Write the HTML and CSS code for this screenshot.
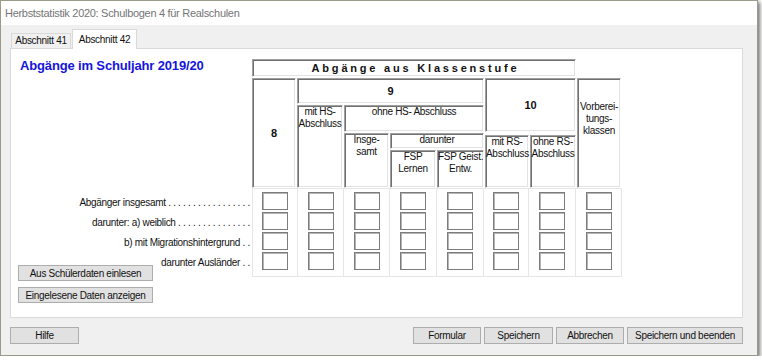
FILE: index.html
```html
<!DOCTYPE html>
<html lang="de">
<head>
  <meta charset="UTF-8">
  <meta name="viewport" content="width=device-width, initial-scale=1.0">
  <title>Herbststatistik 2020</title>
  <link rel="stylesheet" href="styles.css">
</head>
<body>

  <div class="window">
    <div class="titlebar">Herbststatistik 2020: Schulbogen 4 für Realschulen</div>

    <div class="client">
      <!-- Reiter -->
      <div class="tabs">
        <div class="tab">Abschnitt 41</div>
        <div class="tab active">Abschnitt 42</div>
      </div>

      <div class="panel">
        <div class="side">
          <h1>Abgänge im Schuljahr 2019/20</h1>
          <div class="labels">
            <div>Abgänger insgesamt . . . . . . . . . . . . . . . . .</div>
            <div>darunter: a) weiblich . . . . . . . . . . . . . . .</div>
            <div>b) mit Migrationshintergrund . .</div>
            <div>darunter Ausländer . .</div>
          </div>
          <div class="side-buttons">
            <button>Aus Schülerdaten einlesen</button>
            <button>Eingelesene Daten anzeigen</button>
          </div>
        </div>

        <div class="sheet">
          <!-- Kopf der Tabelle -->
          <div class="head">
            <div class="box mid title c1-8 r1">Abgänge aus Klassenstufe</div>
            <div class="box mid big c1 r2-5">8</div>
            <div class="box mid big c2-5 r2">9</div>
            <div class="box mid big c6-7 r2-3">10</div>
            <div class="box vorb c8 r2-5">Vorberei-<br>tungs-<br>klassen</div>
            <div class="box c2 r3-5">mit HS-<br>Abschluss</div>
            <div class="box c3-5 r3">ohne HS- Abschluss</div>
            <div class="box c3 r4-5">Insge-<br>samt</div>
            <div class="box c4-5 r4">darunter</div>
            <div class="box c4 r5">FSP<br>Lernen</div>
            <div class="box c5 r5">FSP Geist.<br>Entw.</div>
            <div class="box rs c6 r4-5">mit RS-<br>Abschluss</div>
            <div class="box rs c7 r4-5">ohne RS-<br>Abschluss</div>
          </div>

          <!-- Eingabefelder -->
          <div class="data" id="data"></div>
        </div>
      </div>

      <div class="footer">
        <button class="btn-hilfe">Hilfe</button>
        <div class="footer-right">
          <button class="w68">Formular</button>
          <button class="w69">Speichern</button>
          <button class="w68">Abbrechen</button>
          <button class="w116">Speichern und beenden</button>
        </div>
      </div>
    </div>
  </div>

  <script>
    const data = document.getElementById("data");
    for (let c = 0; c < 8; c++) {
      const col = document.createElement("div");
      col.className = "col";
      for (let r = 0; r < 4; r++) {
        const input = document.createElement("input");
        input.type = "text";
        col.appendChild(input);
      }
      data.appendChild(col);
    }
  </script>

</body>
</html>
```

FILE: styles.css
```css
body {
  margin: 0;
  background: #fff;
  font-family: "Liberation Sans", Arial, sans-serif;
  font-size: 10px;
  letter-spacing: -0.3px;
  color: #111;
}

.window {
  width: 758px;
  height: 356px;
  box-sizing: border-box;
  border: 1px solid #9a9a88;
  background: #f0f0f0;
  box-shadow: 2px 2px 4px rgba(0, 0, 0, 0.55);
  display: flex;
  flex-direction: column;
}

.titlebar {
  height: 24px;
  line-height: 24px;
  background: #fff;
  padding-left: 4px;
  font-size: 11px;
  letter-spacing: -0.3px;
  color: #757575;
}

.client {
  padding: 4px 14px 0 9px;
}

.tabs {
  display: flex;
  align-items: flex-end;
  height: 19px;
}

.tab {
  width: 60px;
  height: 15px;
  margin-left: 1px;
  box-sizing: border-box;
  border: 1px solid #d9d9d9;
  border-bottom: none;
  background: #f0f0f0;
  text-align: center;
  line-height: 14px;
}

.tab.active {
  width: 65px;
  height: 20px;
  margin-bottom: -1px;
  background: #fff;
  padding-top: 3px;
  position: relative;
  z-index: 1;
}

.panel {
  height: 270px;
  box-sizing: border-box;
  border: 1px solid #dadada;
  background: #fff;
  display: flex;
  padding-top: 10px;
}

.side {
  width: 241px;
  flex: none;
}

h1 {
  margin: 0 0 0 9px;
  font-size: 13px;
  line-height: 14px;
  letter-spacing: -0.15px;
  color: #1515dc;
}

.labels {
  margin-top: 120px;
  padding-right: 2px;
  text-align: right;
}

.labels div {
  height: 20px;
  line-height: 20px;
  white-space: nowrap;
}

.side-buttons {
  margin: -8px 0 0 7px;
  display: flex;
  flex-direction: column;
  gap: 6px;
}

button {
  font-family: "Liberation Sans", Arial, sans-serif;
  font-size: 10px;
  letter-spacing: -0.3px;
  color: #111;
  background: #e1e1e1;
  border: 1px solid #adadad;
  padding: 0;
  height: 16px;
}

.side-buttons button {
  width: 135px;
}

/* Tabellenkopf */
.head {
  display: grid;
  grid-template-columns: 44px 46px 45px 46px 47px 44px 46px 44px;
  grid-template-rows: 18px 26px 27px 16px 38px;
  gap: 1px;
}

.box {
  border: 1px solid;
  border-color: #a0a0a0 #fff #fff #a0a0a0;
  box-shadow: inset 1px 1px 0 #707070, inset -1px -1px 0 #e3e3e3;
  text-align: center;
  line-height: 12px;
  white-space: nowrap;
}

.mid {
  display: flex;
  align-items: center;
  justify-content: center;
}

.big {
  font-weight: bold;
  font-size: 11px;
  letter-spacing: 0;
}

.title {
  font-weight: bold;
  font-size: 11px;
  letter-spacing: 2.8px;
  padding-left: 3px;
}

.vorb {
  padding-top: 22px;
}

.rs {
  margin-top: 2px;
}

.c1 { grid-column: 1; }
.c2 { grid-column: 2; }
.c3 { grid-column: 3; }
.c4 { grid-column: 4; }
.c5 { grid-column: 5; }
.c6 { grid-column: 6; }
.c7 { grid-column: 7; }
.c8 { grid-column: 8; }
.c1-8 { grid-column: 1 / 8; }
.c2-5 { grid-column: 2 / 6; }
.c3-5 { grid-column: 3 / 6; }
.c4-5 { grid-column: 4 / 6; }
.c6-7 { grid-column: 6 / 8; }

.r1 { grid-row: 1; }
.r2 { grid-row: 2; }
.r3 { grid-row: 3; }
.r4 { grid-row: 4; }
.r5 { grid-row: 5; }
.r2-3 { grid-row: 2 / 4; }
.r2-5 { grid-row: 2 / 6; }
.r3-5 { grid-row: 3 / 6; }
.r4-5 { grid-row: 4 / 6; }

/* Eingabefelder */
.data {
  display: grid;
  grid-template-columns: 46px 46px 46px 47px 47px 45px 47px 46px;
  height: 89px;
}

.col {
  border: 1px solid #e6e6e6;
  border-left: none;
  display: flex;
  flex-direction: column;
  align-items: center;
  gap: 2px;
  padding-top: 3px;
}

.col:first-child {
  border-left: 1px solid #e6e6e6;
}

.col input {
  width: 26px;
  height: 18px;
  box-sizing: border-box;
  border: 1px solid #7c7c7c;
  box-shadow: inset 1px 1px 0 #b4b4b4;
  padding: 0;
}

/* Fußleiste */
.footer {
  display: flex;
  justify-content: space-between;
  margin-top: 9px;
}

.footer button {
  height: 17px;
}

.btn-hilfe {
  width: 69px;
}

.footer-right {
  display: flex;
  gap: 3px;
}

.w68 { width: 68px; }
.w69 { width: 69px; }
.w116 { width: 116px; }
```
